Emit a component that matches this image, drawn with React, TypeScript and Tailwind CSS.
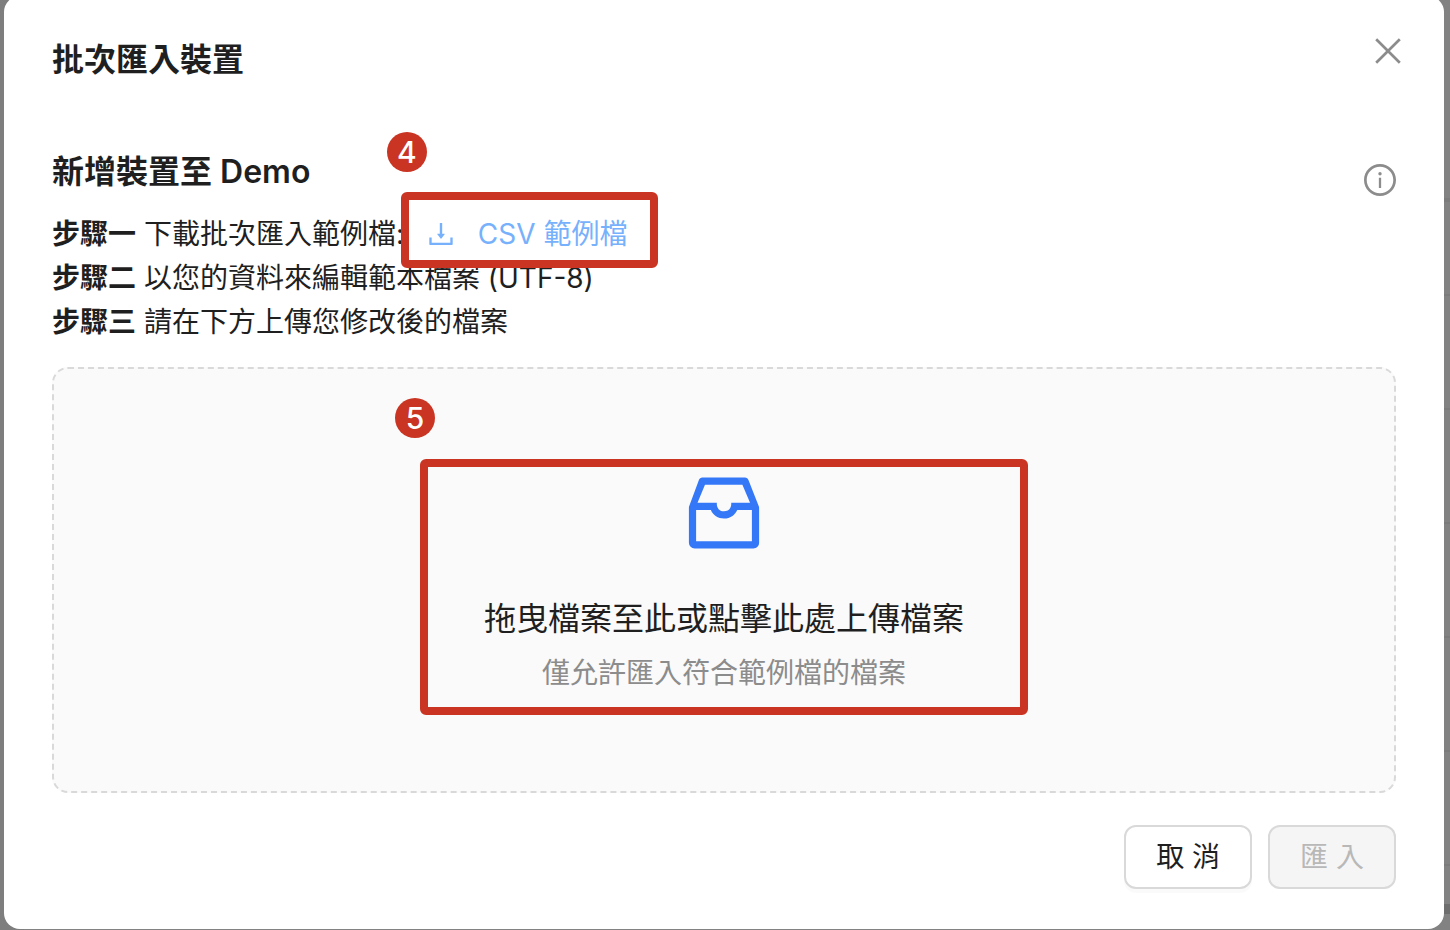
import type { ReactNode } from "react";
import { AiOutlineDownload, AiOutlineInbox, AiOutlineInfoCircle } from "react-icons/ai";

const steps: { label: string; body: ReactNode }[] = [
  { label: "步驟一", body: <>下載批次匯入範例檔: <TemplateLink /></> },
  { label: "步驟二", body: "以您的資料來編輯範本檔案 (UTF-8)" },
  { label: "步驟三", body: "請在下方上傳您修改後的檔案" },
];

function Badge({ n, className }: { n: number; className: string }) {
  return (
    <span className={`absolute flex size-10 items-center justify-center rounded-full bg-[#ca3423] text-[30px] font-medium leading-none text-white ${className}`}>
      {n}
    </span>
  );
}

function TemplateLink() {
  return (
    <a href="#template" className="relative ml-[15px] inline-flex items-center gap-[23px] align-top text-[#77b1fc]">
      <AiOutlineDownload viewBox="64 64 896 896" className="size-7" />
      CSV 範例檔
      <span className="pointer-events-none absolute -bottom-3 -left-[26px] -right-[31px] -top-5 z-10 rounded-md border-8 border-[#ca3423]" />
      <Badge n={4} className="-left-10 -top-20" />
    </a>
  );
}

// Device table dimmed by the modal mask
function Backdrop() {
  return (
    <div aria-hidden="true" className="absolute inset-0 overflow-hidden">
      <div className="h-[202px] border-b-4 border-[#7b7b7b]" />
      <div className="h-[94px] border-b-2 border-[#7b7b7b]" />
      {[1, 2, 3, 4, 5].map((row) => (
        <div key={row} className="h-[114px] border-b-2 border-[#7b7b7b]" />
      ))}
      <div className="mt-[38px] h-2.5 bg-[#6e6e6e]" />
    </div>
  );
}

export default function App() {
  return (
    <div className="relative min-h-screen overflow-hidden bg-[#828282] pb-px pl-1 pr-1.5 font-['Inter','Noto_Sans_CJK_TC',sans-serif] text-[#1f1f1f]">
      <Backdrop />
      <div className="absolute inset-y-0 left-0 w-6 bg-[#7e7e7e]" />
      <div role="dialog" aria-labelledby="import-title" className="relative -mt-1 rounded-2xl bg-white px-12 py-10">
        <h1 id="import-title" className="text-[32px] font-semibold leading-[48px]">批次匯入裝置</h1>
        <button type="button" aria-label="關閉" className="absolute right-10 top-[39px] flex size-8 items-center justify-center text-[#8c8c8c]">
          <svg viewBox="0 0 32 32" className="size-8" fill="none" stroke="currentColor" strokeWidth="2.7">
            <path d="M4.2 4.2l23.6 23.6M27.8 4.2L4.2 27.8" />
          </svg>
        </button>

        <div className="mt-16 flex items-end justify-between">
          <h2 className="text-[32px] font-semibold leading-[48px]">新增裝置至 Demo</h2>
          <button type="button" aria-label="說明" className="text-[#8c8c8c]">
            <AiOutlineInfoCircle viewBox="64 64 896 896" className="size-8" />
          </button>
        </div>

        <ol className="mt-4 text-[28px] leading-[44px]">
          {steps.map((s) => (
            <li key={s.label}>
              <strong className="font-semibold">{s.label}</strong> {s.body}
            </li>
          ))}
        </ol>

        {/* Drop zone */}
        <label className="relative mt-[23px] flex cursor-pointer flex-col items-center rounded-2xl border-2 border-dashed border-[#d9d9d9] bg-[#fafafa] py-24">
          <input type="file" accept=".csv" className="sr-only" />
          <span className="relative flex flex-col items-center">
            <AiOutlineInbox className="size-24 text-[#3478f7]" />
            <span className="mt-8 text-[32px] leading-[52px]">拖曳檔案至此或點擊此處上傳檔案</span>
            <span className="mt-1.5 text-[28px] leading-[44px] text-[#8c8c8c]">僅允許匯入符合範例檔的檔案</span>
            <span className="pointer-events-none absolute -inset-x-16 -bottom-5 -top-1.5 rounded-md border-8 border-[#ca3423]" />
            <Badge n={5} className="-left-[89px] -top-[67px]" />
          </span>
        </label>

        <div className="mt-8 flex justify-end gap-4 text-[28px]">
          <button type="button" className="h-16 rounded-xl border-2 border-[#d9d9d9] bg-white px-[30px] shadow-[0_4px_0_rgba(0,0,0,0.02)]">取 消</button>
          <button type="button" disabled className="h-16 rounded-xl border-2 border-[#d9d9d9] bg-[#f5f5f5] px-[30px] text-[#b8b8b8]">匯 入</button>
        </div>
      </div>
    </div>
  );
}
